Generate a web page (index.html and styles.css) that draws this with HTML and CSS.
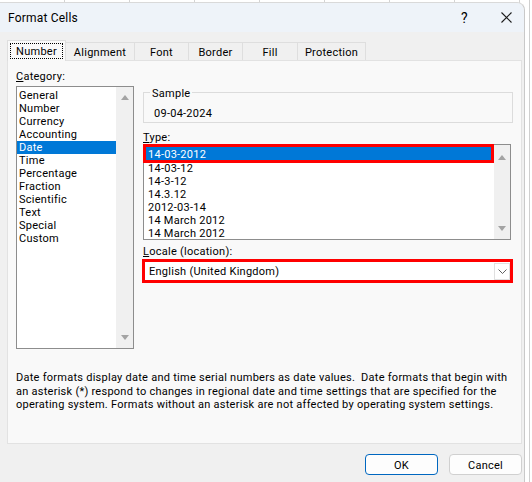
FILE: index.html
```html
<!DOCTYPE html>
<html>
<head>
<meta charset="utf-8">
<link rel="stylesheet" href="styles.css">
</head>
<body>
<div class="screen">
  <div class="dialog">
    <div class="titlebar">
      <span class="title">Format Cells</span>
      <span class="tb-btns">
        <span class="help">?</span>
        <svg class="close" width="11" height="11" viewBox="0 0 11 11"><path d="M0.5 0.5 L10.5 10.5 M10.5 0.5 L0.5 10.5" stroke="#1b1b1b" stroke-width="1.1" fill="none"/></svg>
      </span>
    </div>
    <div class="tabs">
      <div class="tab active w-number"><span class="focus">Number</span></div>
      <div class="tab w-align">Alignment</div>
      <div class="tab w-font">Font</div>
      <div class="tab w-border">Border</div>
      <div class="tab w-fill">Fill</div>
      <div class="tab w-prot">Protection</div>
    </div>
    <div class="panel">
      <div class="cols">
        <div class="left">
          <div class="label"><u>C</u>ategory:</div>
          <div class="list cat">
            <div class="items">
              <div class="item">General</div>
              <div class="item">Number</div>
              <div class="item">Currency</div>
              <div class="item">Accounting</div>
              <div class="item sel">Date</div>
              <div class="item">Time</div>
              <div class="item">Percentage</div>
              <div class="item">Fraction</div>
              <div class="item">Scientific</div>
              <div class="item">Text</div>
              <div class="item">Special</div>
              <div class="item">Custom</div>
            </div>
            <div class="sbar"><span class="arr up"></span><span class="arr down"></span></div>
          </div>
        </div>
        <div class="right">
          <div class="sample">
            <span class="legend">Sample</span>
            <div class="sval">09-04-2024</div>
          </div>
          <div class="label type-label"><u>T</u>ype:</div>
          <div class="list typelist">
            <div class="items">
              <div class="item tsel">14-03-2012</div>
              <div class="item">14-03-12</div>
              <div class="item">14-3-12</div>
              <div class="item">14.3.12</div>
              <div class="item">2012-03-14</div>
              <div class="item">14 March 2012</div>
              <div class="item">14 March 2012</div>
            </div>
            <div class="sbar tsbar"><span class="arr up"></span><span class="arr down"></span></div>
          </div>
          <div class="label locale-label"><u>L</u>ocale (location):</div>
          <div class="combo">
            <span class="combo-text">English (United Kingdom)</span>
            <span class="ddbtn"><svg width="9" height="5" viewBox="0 0 9 5"><path d="M0.5 0.5 L4.5 4.5 L8.5 0.5" stroke="#606060" stroke-width="1" fill="none"/></svg></span>
          </div>
        </div>
      </div>
      <p class="desc">Date formats display date and time serial numbers as date values.&nbsp; Date formats that begin with<br>an asterisk (*) respond to changes in regional date and time settings that are specified for the<br>operating system. Formats without an asterisk are not affected by operating system settings.</p>
    </div>
    <div class="buttons">
      <button class="btn ok">OK</button>
      <button class="btn">Cancel</button>
    </div>
  </div>
  <div class="bg-right"></div>
</div>
</body>
</html>
```

FILE: styles.css
```css
* { box-sizing: border-box; }
html, body { margin: 0; padding: 0; }
body {
  width: 532px;
  height: 482px;
  overflow: hidden;
  background: #ffffff;
  font-family: Roboto, "Noto Sans", sans-serif;
  font-size: 11px;
  letter-spacing: 0.26px;
  color: #000;
}
.screen {
  display: flex;
  height: 482px;
  background: repeating-linear-gradient(90deg, #ffffff 0, #ffffff 64px, #d4d4d4 64px, #d4d4d4 65px);
}
.dialog {
  width: 525px;
  height: 480px;
  margin-top: 2px;
  background: #f0f0f0;
  border-top-right-radius: 8px;
  border-right: 1px solid #c9c9c9;
  border-top: 1px solid #d9d9d9;
  display: flex;
  flex-direction: column;
}
.bg-right {
  flex: 1;
  background: linear-gradient(90deg, #fff 0, #fff 4px, #cfcfcf 4px, #cfcfcf 5px, #fff 5px);
}
.titlebar {
  height: 29px;
  background: #eef3f9;
  border-top-right-radius: 8px;
  display: flex;
  align-items: center;
  justify-content: space-between;
  padding-left: 8px;
  padding-right: 12px;
}
.title { font-size: 12px; letter-spacing: 0.2px; }
.tb-btns { display: flex; align-items: center; gap: 33px; }
.help { font-size: 14px; line-height: 14px; }
.close { display: block; }

.tabs {
  height: 28px;
  padding-top: 8px;
  padding-left: 7px;
  display: flex;
  align-items: flex-end;
  position: relative;
  z-index: 1;
}
.tab {
  height: 18px;
  border: 1px solid #dedede;
  border-bottom: none;
  margin-left: -1px;
  padding-top: 2px;
  display: flex;
  align-items: center;
  justify-content: center;
  background: #f0f0f0;
}
.tab.active {
  height: 21px;
  margin-left: 0;
  margin-bottom: -1px;
  background: #f9f9f9;
  padding-top: 0;
  padding-bottom: 1px;
}
.w-number { width: 59px; }
.w-align { width: 70px; }
.w-font { width: 55px; }
.w-border { width: 55px; }
.w-fill { width: 56px; }
.w-prot { width: 69px; }
.focus {
  border: 1px dotted #000;
  height: 16px;
  padding: 1px 5px 0;
  display: flex;
  align-items: center;
}

.panel {
  margin-left: 7px;
  width: 515px;
  height: 384px;
  background: #f9f9f9;
  border: 1px solid #e2e2e2;
  padding: 8px 8px 0 8px;
}
.cols {
  display: flex;
  gap: 9px;
  align-items: flex-start;
}
.left { width: 121px; }
.right { width: 370px; }
.label { line-height: 16px; height: 14px; }
.label u { text-decoration-thickness: 1px; text-underline-offset: 1px; }

.list {
  background: #fff;
  border: 1px solid #8d8d8d;
  display: flex;
}
.items { flex: 1; }
.item {
  height: 13px;
  line-height: 13px;
  padding-left: 2px;
  white-space: nowrap;
}
.cat { margin-top: 3px; height: 263px; }
.cat .items { padding-top: 2px; }
.item.sel { background: #0078d7; color: #fff; }
.sbar {
  width: 17px;
  background: #f0f0f0;
  display: flex;
  flex-direction: column;
  justify-content: space-between;
  align-items: center;
  padding: 8px 0 8px;
}
.arr {
  width: 0;
  height: 0;
  border-left: 4px solid transparent;
  border-right: 4px solid transparent;
}
.arr.up { border-bottom: 5px solid #a3a3a3; }
.arr.down { border-top: 5px solid #a3a3a3; }

.sample {
  margin-top: 23px;
  height: 31px;
  border: 1px solid #dcdcdc;
  padding-left: 10px;
}
.legend {
  display: block;
  width: max-content;
  height: 15px;
  line-height: 15px;
  margin-top: -7px;
  margin-left: -4px;
  padding: 0 2px;
  background: #f9f9f9;
}
.sval { margin-top: 5px; line-height: 15px; }

.type-label { margin-top: 7px; }
.typelist { height: 96px; width: 368px; }
.typelist .items { padding-left: 0; }
.typelist .item { padding-left: 4px; }
.item.tsel {
  height: 19px;
  line-height: 13px;
  margin: -1px 0 -1px -1px;
  border: 3px solid #ff0000;
  background: #0078d7;
  color: #fff;
  padding-left: 2px;
  padding-top: 1px;
  position: relative;
  z-index: 1;
}
.tsbar { width: 16px; padding: 10px 0 8px; }

.locale-label { margin-top: 4px; }
.combo {
  margin-top: 1px;
  margin-left: -1px;
  width: 371px;
  height: 24px;
  border: 3px solid #ff0000;
  background: #fff;
  display: flex;
  align-items: center;
  justify-content: space-between;
  padding-left: 4px;
  padding-top: 1px;
}
.ddbtn {
  width: 16px;
  height: 17px;
  border: 1px solid #e0e0e0;
  background: #fff;
  display: flex;
  align-items: center;
  justify-content: center;
}
.ddbtn svg { display: block; }

.desc {
  margin: 22px 0 0 0;
  line-height: 13.5px;
  white-space: nowrap;
}

.buttons {
  display: flex;
  justify-content: flex-end;
  gap: 11px;
  padding-right: 2px;
  margin-top: 10px;
}
.btn {
  width: 73px;
  height: 21px;
  font-family: inherit;
  font-size: 11px;
  letter-spacing: inherit;
  background: #fdfdfd;
  border: 1px solid #d0d0d0;
  border-radius: 4px;
  color: #000;
  padding: 1px 0 0;
}
.btn.ok { border-color: #0067c0; }
```
